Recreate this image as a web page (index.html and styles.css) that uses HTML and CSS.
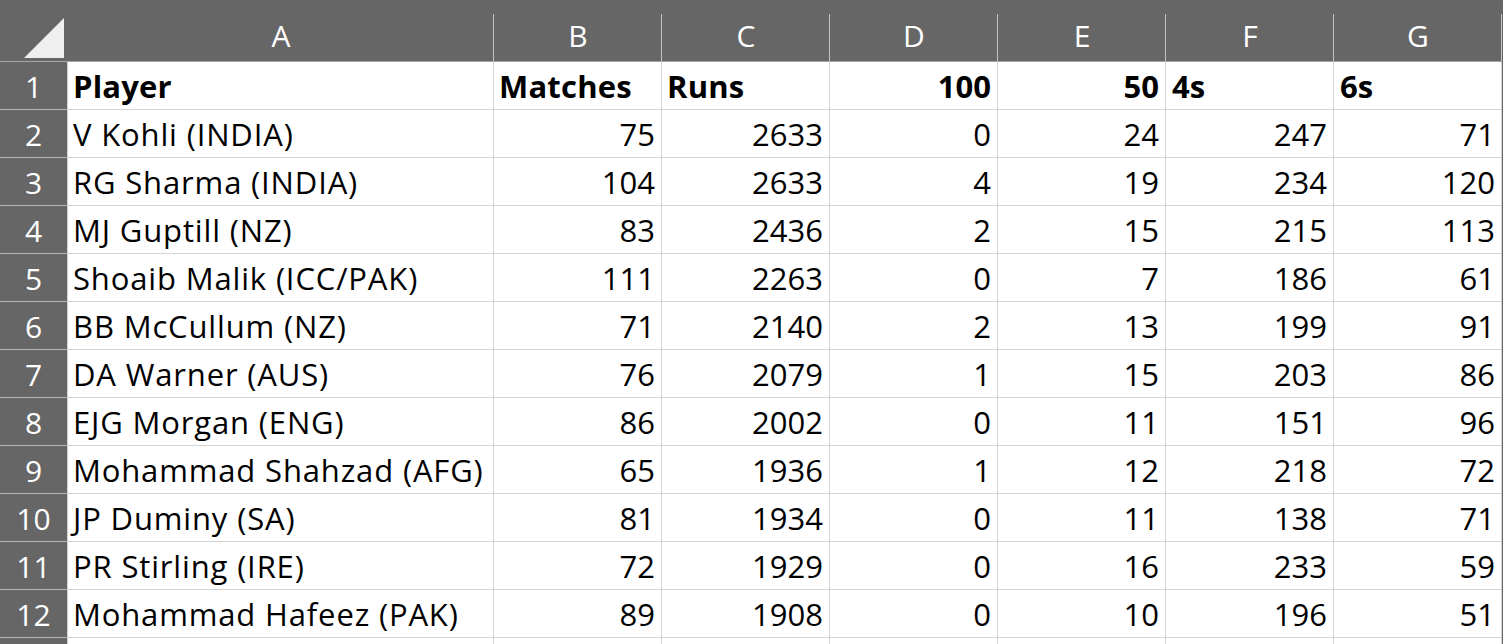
FILE: index.html
```html
<!DOCTYPE html>
<html>
<head>
<meta charset="utf-8">
<link rel="stylesheet" href="styles.css">
</head>
<body>
<div class="sheet">
  <div class="corner"><svg class="corner-tri" width="68" height="62" viewBox="0 0 68 62"><polygon points="24,58 64,58 64,18" fill="#efefef"/></svg></div>
  <div class="colhead">A</div>
  <div class="colhead">B</div>
  <div class="colhead">C</div>
  <div class="colhead">D</div>
  <div class="colhead">E</div>
  <div class="colhead">F</div>
  <div class="colhead">G</div>

  <div class="rowhead">1</div>
  <div class="cell bold txt">Player</div>
  <div class="cell bold txt">Matches</div>
  <div class="cell bold txt">Runs</div>
  <div class="cell bold num">100</div>
  <div class="cell bold num">50</div>
  <div class="cell bold">4s</div>
  <div class="cell bold">6s</div>

  <div class="rowhead">2</div>
  <div class="cell txt">V Kohli (INDIA)</div>
  <div class="cell num">75</div><div class="cell num">2633</div><div class="cell num">0</div><div class="cell num">24</div><div class="cell num">247</div><div class="cell num">71</div>

  <div class="rowhead">3</div>
  <div class="cell txt">RG Sharma (INDIA)</div>
  <div class="cell num">104</div><div class="cell num">2633</div><div class="cell num">4</div><div class="cell num">19</div><div class="cell num">234</div><div class="cell num">120</div>

  <div class="rowhead">4</div>
  <div class="cell txt">MJ Guptill (NZ)</div>
  <div class="cell num">83</div><div class="cell num">2436</div><div class="cell num">2</div><div class="cell num">15</div><div class="cell num">215</div><div class="cell num">113</div>

  <div class="rowhead">5</div>
  <div class="cell txt">Shoaib Malik (ICC/PAK)</div>
  <div class="cell num">111</div><div class="cell num">2263</div><div class="cell num">0</div><div class="cell num">7</div><div class="cell num">186</div><div class="cell num">61</div>

  <div class="rowhead">6</div>
  <div class="cell txt">BB McCullum (NZ)</div>
  <div class="cell num">71</div><div class="cell num">2140</div><div class="cell num">2</div><div class="cell num">13</div><div class="cell num">199</div><div class="cell num">91</div>

  <div class="rowhead">7</div>
  <div class="cell txt">DA Warner (AUS)</div>
  <div class="cell num">76</div><div class="cell num">2079</div><div class="cell num">1</div><div class="cell num">15</div><div class="cell num">203</div><div class="cell num">86</div>

  <div class="rowhead">8</div>
  <div class="cell txt">EJG Morgan (ENG)</div>
  <div class="cell num">86</div><div class="cell num">2002</div><div class="cell num">0</div><div class="cell num">11</div><div class="cell num">151</div><div class="cell num">96</div>

  <div class="rowhead">9</div>
  <div class="cell txt">Mohammad Shahzad (AFG)</div>
  <div class="cell num">65</div><div class="cell num">1936</div><div class="cell num">1</div><div class="cell num">12</div><div class="cell num">218</div><div class="cell num">72</div>

  <div class="rowhead">10</div>
  <div class="cell txt">JP Duminy (SA)</div>
  <div class="cell num">81</div><div class="cell num">1934</div><div class="cell num">0</div><div class="cell num">11</div><div class="cell num">138</div><div class="cell num">71</div>

  <div class="rowhead">11</div>
  <div class="cell txt">PR Stirling (IRE)</div>
  <div class="cell num">72</div><div class="cell num">1929</div><div class="cell num">0</div><div class="cell num">16</div><div class="cell num">233</div><div class="cell num">59</div>

  <div class="rowhead">12</div>
  <div class="cell txt">Mohammad Hafeez (PAK)</div>
  <div class="cell num">89</div><div class="cell num">1908</div><div class="cell num">0</div><div class="cell num">10</div><div class="cell num">196</div><div class="cell num">51</div>

  <div class="rowhead"></div>
  <div class="cell"></div><div class="cell"></div><div class="cell"></div><div class="cell"></div><div class="cell"></div><div class="cell"></div><div class="cell"></div>
</div>
</body>
</html>
```

FILE: styles.css
```css
html, body {
  margin: 0;
  padding: 0;
  background: #ffffff;
  overflow: hidden;
  height: 644px;
}

.sheet {
  display: grid;
  grid-template-columns: 68px 426px repeat(6, 168px) 1px;
  grid-template-rows: 62px;
  grid-auto-rows: 48px;
  width: 1503px;
  height: 644px;
  overflow: hidden;
  background: #666666;
  font-family: "Open Sans", "Noto Sans", sans-serif;
  font-size: 31px;
  color: #000;
}

.corner {
  grid-column: 1;
  background: #666666;
  border-bottom: 1px solid #a6a6a6;
  box-sizing: border-box;
}

.corner-tri {
  display: block;
}

.colhead {
  box-sizing: border-box;
  background: linear-gradient(#c4c4c4, #c4c4c4) right 14px / 1px calc(100% - 14px) no-repeat, #666666;
  border-bottom: 1px solid #a6a6a6;
  color: #ffffff;
  font-size: 30px;
  display: flex;
  align-items: center;
  justify-content: center;
  padding-top: 14px;
  padding-bottom: 4px;
  line-height: 1;
}

.rowhead {
  grid-column: 1;
  box-sizing: border-box;
  background: #666666;
  color: #ffffff;
  font-size: 30px;
  border-right: 1px solid #d0d0d0;
  border-bottom: 1px solid #b4b4b4;
  display: flex;
  align-items: center;
  justify-content: center;
  padding-top: 2px;
}

.cell {
  box-sizing: border-box;
  background: #ffffff;
  border-right: 1px solid #d4d4d4;
  border-bottom: 1px solid #d4d4d4;
  display: flex;
  align-items: center;
  padding: 2px 6px 0 6px;
  white-space: nowrap;
  overflow: hidden;
  line-height: 1;
}

.cell.txt {
  letter-spacing: 0.85px;
  padding-left: 5px;
}

.cell.bold.txt {
  letter-spacing: 0.2px;
}

.cell.num {
  justify-content: flex-end;
}

.cell.bold {
  font-weight: 700;
}
```
